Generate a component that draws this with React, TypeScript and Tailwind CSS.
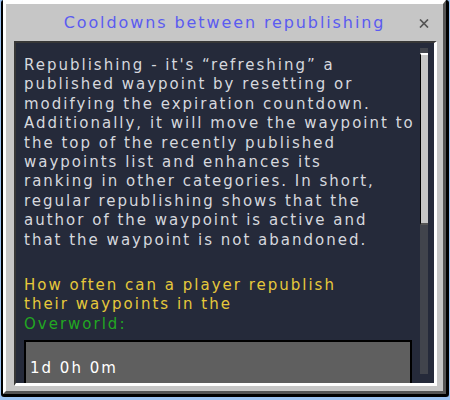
import React from 'react';

const bodyLines = [
  'Republishing - it\'s “refreshing” a',
  'published waypoint by resetting or',
  'modifying the expiration countdown.',
  'Additionally, it will move the waypoint to',
  'the top of the recently published',
  'waypoints list and enhances its',
  'ranking in other categories. In short,',
  'regular republishing shows that the',
  'author of the waypoint is active and',
  'that the waypoint is not abandoned.',
];

const font = { fontFamily: '"DejaVu Sans", "Liberation Sans", sans-serif' };

const CloseIcon: React.FC = () => (
  <svg width="10" height="9" viewBox="0 0 10 9" className="block">
    <path d="M1 0.5 L9 8.5 M9 0.5 L1 8.5" stroke="#555555" strokeWidth="1.7" fill="none" />
  </svg>
);

const Scrollbar: React.FC = () => (
  <div className="w-[8px] mt-[5px] mb-[9px] mr-[6px] bg-[#41444c] flex flex-col">
    <div className="mt-[5px] h-[172px] bg-[#c6c6c6] border-t-2 border-t-white border-b-2 border-b-[#555555] border-l border-l-black" />
  </div>
);

export default function App() {
  return (
    <div className="w-[450px] h-[400px] bg-[#9cc3f2]" style={font}>
      <div className="ml-[1px] w-[448px] h-[397px] border-l-2 border-r-[3px] border-b-[3px] border-black rounded-[3px]">
        <div className="h-full flex flex-col bg-[#c6c6c6] border-t-[4px] border-l-[3px] border-t-white border-l-white border-r-[3px] border-b-[3px] border-r-[#555555] border-b-[#555555]">
          <div className="h-[37px] shrink-0 relative flex items-center justify-center">
            <span className="text-[16px] tracking-[1.9px] text-[#5b5bf0] leading-none">
              Cooldowns between republishing
            </span>
            <div className="absolute right-[14px] top-[15px]">
              <CloseIcon />
            </div>
          </div>
          <div className="flex-1 ml-[8px] mr-[6px] mb-[5px] flex bg-[#252a3a] border-t-2 border-l-2 border-t-[#373737] border-l-[#373737] border-r-[3px] border-b-[3px] border-r-white border-b-white overflow-hidden">
            <div className="flex-1 overflow-hidden pl-[8px] pt-[13px] text-[15px] leading-[19.4px] tracking-[2px] whitespace-nowrap">
              <div className="text-[#d6d8de]">
                {bodyLines.map((l) => (
                  <div key={l}>{l}</div>
                ))}
              </div>
              <div className="mt-[26px] text-[#e6c83a]">
                <div>How often can a player republish</div>
                <div>their waypoints in the</div>
              </div>
              <div className="text-[#22a722]">Overworld:</div>
              <div className="mt-[6px] w-[388px] h-[56px] bg-[#5f5f5f] border-2 border-black pl-[4px] pt-[17px] text-white">
                1d 0h 0m
              </div>
            </div>
            <Scrollbar />
          </div>
        </div>
      </div>
    </div>
  );
}
